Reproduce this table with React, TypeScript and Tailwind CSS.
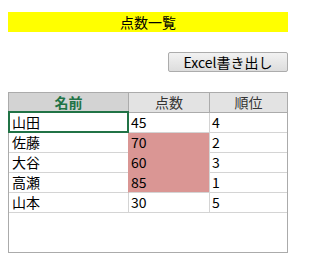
import React from 'react';

type Row = { name: string; score: number; rank: number; highlight?: boolean };

const rows: Row[] = [
  { name: '山田', score: 45, rank: 4 },
  { name: '佐藤', score: 70, rank: 2, highlight: true },
  { name: '大谷', score: 60, rank: 3, highlight: true },
  { name: '高瀬', score: 85, rank: 1, highlight: true },
  { name: '山本', score: 30, rank: 5 },
];

const font = { fontFamily: '"Noto Sans CJK JP", "Liberation Sans", sans-serif' };

export default function App() {
  return (
    <div className="w-[309px] h-[271px] bg-white text-black" style={font}>
      <div className="ml-2 pt-3 w-[280px] flex flex-col">
        {/* title bar */}
        <div className="h-5 bg-[#ffff00] text-center text-[14px] leading-5">点数一覧</div>

        {/* export button */}
        <button className="mt-5 self-end w-[120px] h-5 border border-[#acacac] rounded-[2px] bg-gradient-to-b from-[#f2f2f2] to-[#dddddd] text-[14px] leading-[18px]">
          Excel書き出し
        </button>

        {/* score sheet */}
        <div className="mt-5 h-[161px] border border-[#ababab] bg-white">
          <div className="grid grid-cols-[119px_81px_1fr] text-[14px] leading-[19px]">
            <div className="h-5 bg-[#d3d3d3] border-b-2 border-[#217346] text-center font-bold text-[#217346]">名前</div>
            <div className="h-5 bg-[#e3e3e3] border-l border-b border-[#ababab] text-center text-[#333]">点数</div>
            <div className="h-5 bg-[#e3e3e3] border-l border-b border-[#ababab] text-center text-[#333]">順位</div>

            {rows.map((r, i) => (
              <React.Fragment key={r.name}>
                <div className="relative h-5 pl-[3px] border-b border-[#d4d4d4]">
                  {r.name}
                  {i === 0 && <div className="absolute -inset-px -top-[2px] border-2 border-[#217346] z-10" />}
                </div>
                <div
                  className={
                    r.highlight
                      ? `h-5 pl-[2px] bg-[#da9694] border-l border-l-[#da9694] border-b ${rows[i + 1]?.highlight ? 'border-b-[#da9694]' : 'border-b-[#d4d4d4]'}`
                      : 'h-5 pl-[2px] border-l border-b border-[#d4d4d4]'
                  }
                >
                  {r.score}
                </div>
                <div className="h-5 pl-[2px] border-l border-b border-[#d4d4d4]">{r.rank}</div>
              </React.Fragment>
            ))}
          </div>
        </div>
      </div>
    </div>
  );
}
